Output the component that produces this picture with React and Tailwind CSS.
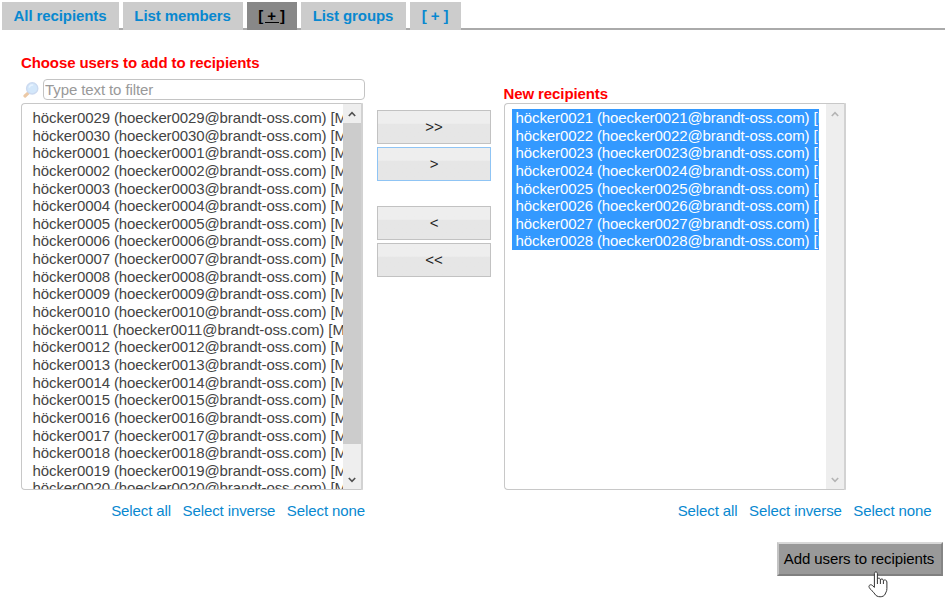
import React, { useState } from 'react';
import { clsx } from 'clsx';

const TABS = [
  { id: 'all', label: 'All recipients', width: 'w-[117px]' },
  { id: 'members', label: 'List members', width: 'w-[120px]' },
  { id: 'members-add', label: '[ + ]', width: 'w-[50px]' },
  { id: 'groups', label: 'List groups', width: 'w-[105px]' },
  { id: 'groups-add', label: '[ + ]', width: 'w-[51px]' },
];

const toUser = (n) => {
  const id = String(n).padStart(4, '0');
  return `höcker${id} (hoecker${id}@brandt-oss.com) [M`;
};

const AVAILABLE = [29, 30, ...Array.from({ length: 20 }, (_, i) => i + 1)].map(toUser);
const CHOSEN = [21, 22, 23, 24, 25, 26, 27, 28].map(toUser);

const Chevron = ({ down, className }) => (
  <svg viewBox="0 0 8 6" className={clsx('w-[8px] h-[6px]', className)} fill="none" stroke="currentColor" strokeWidth="1.6">
    <path d={down ? 'M0.8 1 L4 4.4 L7.2 1' : 'M0.8 5 L4 1.6 L7.2 5'} />
  </svg>
);

const Magnifier = () => (
  <svg viewBox="0 0 16 16" className="w-4 h-4">
    <path d="M2 14 L5.4 10.8" stroke="#ecc9a6" strokeWidth="3.2" strokeLinecap="round" />
    <circle cx="9.2" cy="6.4" r="5.6" fill="#d3e7fa" stroke="#ccdaf0" strokeWidth="1.4" />
    <path d="M6.2 5.6 A3.4 3.4 0 0 1 10.2 3.2" stroke="#e8f4ff" strokeWidth="1.4" fill="none" />
  </svg>
);

const HandCursor = () => (
  <svg viewBox="0 0 21 28" className="w-[21px] h-[28px]" fill="#fff" stroke="#333" strokeWidth="1" strokeLinejoin="round">
    <path d="M6.4 16.4 V2.6 C6.4 0.4 9.4 0.4 9.4 2.6 V8.4 C9.6 6.6 12.4 6.8 12.4 8.8 C12.8 7.4 15.4 7.7 15.4 9.6 C16 8.5 18.9 8.7 18.9 11 V17.6 C18.9 20.5 17.6 21.6 17.2 23 C15.8 26.7 8.6 26.7 6.8 23 C5.4 20.5 2.6 19.2 1.2 16.4 C0.2 14.3 2.6 13 4.2 14.3 Z" />
    <path d="M9.4 8.4 V13 M12.4 8.8 V13 M15.4 9.8 V13" />
  </svg>
);

const UserList = ({ users, selected, scrollable }) => (
  <div className="flex w-[342px] h-[387px] border border-[#c8c8c8] border-r-2 border-r-[#d2d2d2] rounded-[4px] rounded-r-none bg-white overflow-hidden">
    <div className={clsx('flex-1 min-w-0 overflow-hidden pt-[5px]', selected ? 'pl-[7px] pr-[7px]' : 'pl-[6.5px]')}>
      {users.map((user) => (
        <div
          key={user}
          className={clsx(
            'h-[17.65px] pl-[4px] leading-[18px] whitespace-nowrap overflow-x-clip',
            selected ? 'bg-[#3399ff] text-white' : 'text-[#444]'
          )}
        >
          {user}
        </div>
      ))}
    </div>
    <div className="flex flex-col items-center w-[18px] bg-[#eeeeee]">
      <div className="flex items-center justify-center h-[19px] shrink-0">
        <Chevron className={scrollable ? 'text-[#505050]' : 'text-[#b4b4b4]'} />
      </div>
      <div className={clsx('w-full h-[321px]', scrollable && 'bg-[#cccccc]')} />
      <div className="flex items-end justify-center flex-1 pb-[6px]">
        <Chevron down className={scrollable ? 'text-[#505050]' : 'text-[#b4b4b4]'} />
      </div>
    </div>
  </div>
);

const MoveButton = ({ children, focused }) => (
  <button
    className={clsx(
      'flex items-center justify-center w-[114px] h-[34px] border bg-linear-to-b from-[#eeeeee] from-38% to-[#e6e6e6] to-42% text-[#222]',
      focused ? 'border-[#8fc4f4]' : 'border-[#c2c2c2]'
    )}
  >
    {children}
  </button>
);

const SelectLinks = ({ className }) => (
  <div className={clsx('flex gap-[11.5px] leading-[18px] text-[#0888d0] whitespace-nowrap', className)}>
    <a href="#all">Select all</a>
    <a href="#inverse">Select inverse</a>
    <a href="#none">Select none</a>
  </div>
);

const App = () => {
  const [activeTab, setActiveTab] = useState('members-add');
  const [filter, setFilter] = useState('');

  return (
    <div className="w-[945px] h-[600px] overflow-hidden bg-white font-['Liberation_Sans',Arial,sans-serif] text-[15px] tracking-[-0.1px]">
      {/* Tabs */}
      <div className="flex h-[30px] pt-[2px]">
        <div className="w-[2px]" />
        {TABS.map((tab) => (
          <React.Fragment key={tab.id}>
            <button
              onClick={() => setActiveTab(tab.id)}
              className={clsx(
                'h-[28px] pr-[1px] font-bold whitespace-nowrap',
                tab.width,
                activeTab === tab.id ? 'bg-[#888888] text-black underline' : 'bg-[#cccccc] text-[#0888d0]'
              )}
            >
              {tab.label}
            </button>
            <div className="w-[4px] border-b-2 border-[#aaaaaa]" />
          </React.Fragment>
        ))}
        <div className="flex-1 border-b-2 border-[#aaaaaa]" />
      </div>

      <div className="flex pl-[21px]">
        {/* Available users */}
        <div className="w-[344px]">
          <h2 className="mt-[24px] h-[17px] leading-[18px] font-bold text-[#ff0000]">Choose users to add to recipients</h2>
          <div className="flex items-center mt-[8px] h-[21px]">
            <div className="w-[22px] pl-[2px]">
              <Magnifier />
            </div>
            <input
              value={filter}
              onChange={(e) => setFilter(e.target.value)}
              placeholder="Type text to filter"
              className="w-[322px] h-[21px] pl-[1px] pt-px border border-[#c4c4c4] rounded-[4px] placeholder:text-[#999] outline-none"
            />
          </div>
          <div className="mt-[3px]">
            <UserList users={AVAILABLE.filter((user) => user.includes(filter))} scrollable />
          </div>
          <SelectLinks className="mt-[12px] justify-end" />
        </div>

        {/* Move buttons */}
        <div className="flex flex-col ml-[12px] pt-[80px] gap-[3px]">
          <MoveButton>&gt;&gt;</MoveButton>
          <MoveButton focused>&gt;</MoveButton>
          <div className="h-[19px]" />
          <MoveButton>&lt;</MoveButton>
          <MoveButton>&lt;&lt;</MoveButton>
        </div>

        {/* New recipients */}
        <div className="ml-[12.5px] w-[428px]">
          <h2 className="mt-[54px] h-[19px] leading-[19px] font-bold text-[#ff0000]">New recipients</h2>
          <UserList users={CHOSEN} selected />
          <SelectLinks className="mt-[12px] justify-end" />
        </div>
      </div>

      {/* Submit */}
      <div className="flex justify-end mt-[22px] pr-[2px]">
        <div className="relative">
          <button className="w-[166px] h-[34px] pt-px pr-[2px] border-2 border-t-[#d8d8d8] border-l-[#c4c4c4] border-r-[#858585] border-b-[#808080] bg-[#999999] text-black whitespace-nowrap">
            Add users to recipients
          </button>
          <div className="absolute left-[91px] top-[29px]">
            <HandCursor />
          </div>
        </div>
      </div>
    </div>
  );
};

export default App;
